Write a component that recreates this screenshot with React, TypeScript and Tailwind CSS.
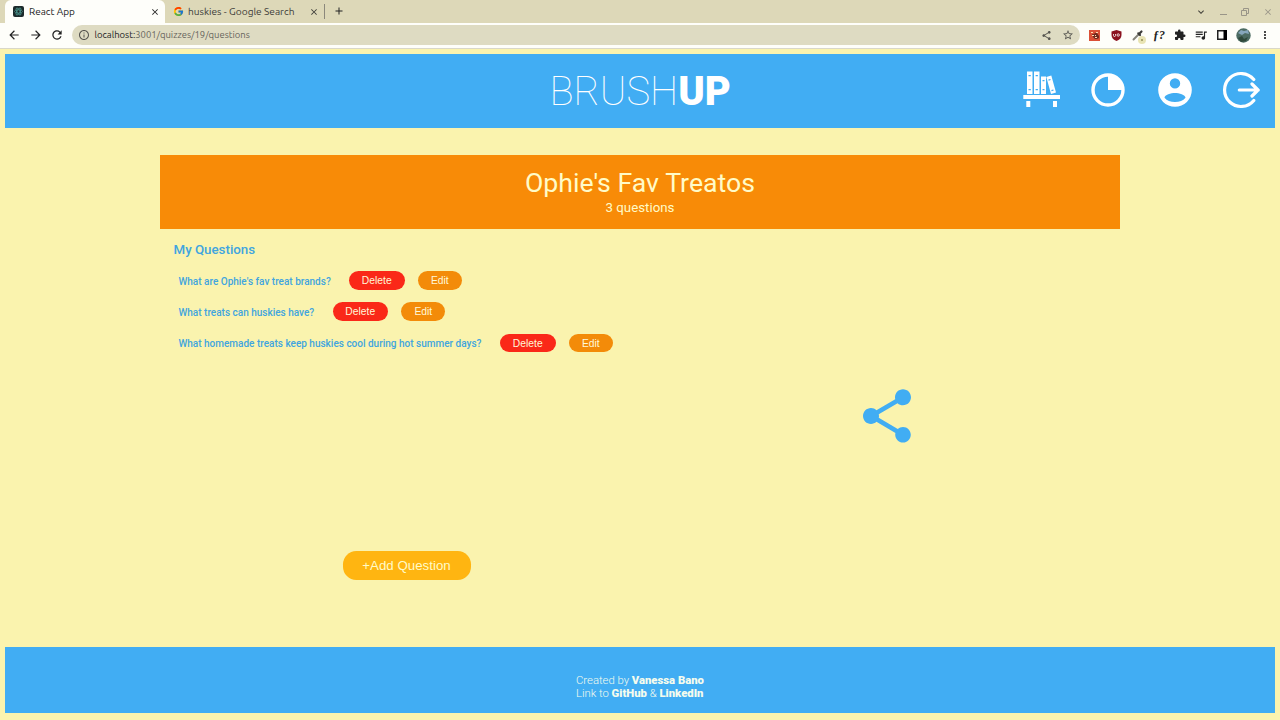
import type { ReactNode } from "react";
import {
  MdShare, MdStarBorder, MdExtension, MdQueueMusic, MdMoreVert, MdArrowBack, MdArrowForward,
  MdRefresh, MdInfoOutline, MdClose, MdAdd, MdExpandMore,
} from "react-icons/md";
import { FcGoogle } from "react-icons/fc";

function TabStrip() {
  return (
    <div className="flex h-[23px] bg-[#ddd8b8] font-[Ubuntu,'Open_Sans',sans-serif] text-[#3c3c38]">
      <div className="ml-[5px] flex w-[160px] items-center rounded-t-md bg-[#fefefa] pl-2 pr-[5px]">
        <svg className="h-[11px] w-[11px]" viewBox="0 0 11 11" fill="none" stroke="#4c9a91" strokeWidth=".7">
          <rect width="11" height="11" rx="2" fill="#1c2a2b" stroke="none" />
          <ellipse cx="5.5" cy="5.5" rx="4" ry="1.6" />
          <ellipse cx="5.5" cy="5.5" rx="4" ry="1.6" transform="rotate(60 5.5 5.5)" />
          <ellipse cx="5.5" cy="5.5" rx="4" ry="1.6" transform="rotate(120 5.5 5.5)" />
        </svg>
        <span className="ml-[5px] flex-1 whitespace-nowrap text-[10px] text-[#222]">React App</span>
        <MdClose className="h-[10px] w-[10px] text-[#222]" />
      </div>
      <div className="flex w-[160px] items-center border-r border-[#8b887c] [border-image:linear-gradient(transparent_5px,#8b887c_5px,#8b887c_18px,transparent_18px)_1] pl-2">
        <FcGoogle className="h-[11px] w-[11px]" />
        <span className="ml-[4px] w-[120px] whitespace-nowrap text-[10.15px]">huskies - Google Search</span>
        <MdClose className="ml-px h-[10px] w-[10px]" />
      </div>
      <MdAdd className="ml-2 mt-[5px] h-3 w-3 text-[#222]" />
      <div className="ml-auto flex items-center text-[#999588]">
        <MdExpandMore className="mr-[13px] h-3 w-3 text-[#44423b]" />
        <span className="mr-[14px] mt-[6px] h-px w-[7px] bg-[#999588]" />
        <svg className="mr-[14px] h-2 w-2" viewBox="0 0 8 8" fill="none" stroke="currentColor"><path d="M.5 2.5h5v5h-5zM2.500 2V.5h5v5H6" /></svg>
        <MdClose className="mr-[7px] h-[10px] w-[10px]" />
      </div>
    </div>
  );
}

function Toolbar() {
  return (
    <div className="flex h-[26px] items-center border-b border-[#d9d7c9] bg-[#fefefa] pb-px text-[#222]">
      <MdArrowBack className="ml-[7px] h-[14px] w-[14px]" />
      <MdArrowForward className="ml-2 h-[14px] w-[14px]" />
      <MdRefresh className="ml-[7px] h-[14px] w-[14px]" />
      <div className="ml-2 flex h-[20px] w-[1008px] items-center rounded-full bg-[#dedbc2] pl-[6px] pr-[6px]">
        <MdInfoOutline className="h-3 w-3 text-[#55544f]" />
        <span className="ml-[4.500px] flex-1 pt-px font-[Ubuntu,'Open_Sans',sans-serif] text-[9.450px] text-[#66645c]">
          <span className="text-[#222]">localhost:</span>3001/quizzes/19/questions
        </span>
        <MdShare className="mr-[10px] h-[11px] w-[11px] text-[#55544f]" />
        <MdStarBorder className="h-3 w-3 text-[#55544f]" />
      </div>
      <div className="ml-auto mr-[9px] flex items-center">
        <svg className="h-[11px] w-[11px]" viewBox="0 0 11 11">
          <rect width="11" height="11" fill="#db5037" />
          <path d="M3 4h2l1-1h2l2 3v2L8 9H6L4 7z" fill="#722a20" />
          <path d="M2 2h2v1H2zM7 2h2v1H7zM3 5h2v1H3zM6 5h1v1H6zM6 7h2v1H6z" fill="#ffd9b0" />
        </svg>
        <svg className="ml-[11px] h-[11px] w-[11px]" viewBox="0 0 11 11">
          <path d="M5.500 0l5 1.600V5c0 3-2 5-5 6-3-1-5-3-5-6V1.600z" fill="#8b1220" />
          <path d="M2.500 4v1.500a1 1 0 002 0V4M6 5a1.200 1.200 0 102.400 0A1.200 1.200 0 006 5" fill="none" stroke="#fff" strokeWidth=".8" />
        </svg>
        <div className="relative ml-[10px]">
          <svg className="h-3 w-3" viewBox="0 0 12 12" fill="none" strokeLinecap="round">
            <path d="M1.500 10.500L6.500 5.500" stroke="#85837a" strokeWidth="1.900" />
            <path d="M6.300 4.300L8 6M7.500 4.500L9.500 2.500" stroke="#3b3a37" strokeWidth="2.200" />
          </svg>
          <span className="absolute left-[6px] top-[7px] flex h-2 w-2 items-center justify-center rounded-full bg-[#e9e4b4]">
            <span className="h-0.5 w-0.5 bg-[#a9a570]" />
          </span>
        </div>
        <span className="ml-[9px] w-3 font-['Liberation_Serif',serif] text-[12px] font-bold italic leading-3">ƒ?</span>
        <MdExtension className="ml-[9px] h-3 w-3" />
        <MdQueueMusic className="ml-2 h-[14px] w-[14px]" />
        <svg className="ml-[9px] h-[10px] w-[10px]" viewBox="0 0 10 10"><path d="M.75.75h8.500v8.500H.75z" fill="none" stroke="currentColor" strokeWidth="1.500" /><path d="M6.500 0H10v10H6.500z" /></svg>
        <svg className="ml-[9px] h-[15px] w-[15px]" viewBox="0 0 15 15">
          <circle cx="7.500" cy="7.500" r="7.200" fill="#4c6b62" />
          <path d="M2 5l3-3 3 1 4-1 1 4-4-1-3 2z" fill="#86a6bc" />
          <path d="M2 10l4-2 2 3 4-2-2 4-5 1z" fill="#2f493b" />
        </svg>
        <MdMoreVert className="ml-2 h-3 w-3" />
      </div>
    </div>
  );
}

function BookshelfIcon() {
  return (
    <svg className="h-[38px] w-[38px]" viewBox="0 0 38 38" fill="currentColor">
      <path fillRule="evenodd" d="M4 .5h5.500v22.500H4zM5.500 4v1.200h2.300V4zM5.500 18v1.200h2.300V18zM11 .5h5.500v22.500H11zM12.600 4v1.200h2.300V4zM12.600 18v1.200h2.300V18zM18 5.500h5v17.500h-5zM19.500 9v1.200h2V9zM19.500 18v1.200h2V18z" />
      <path fillRule="evenodd" d="M23.300 6l5-1.500L33 21.500l-5 1.500zM25.300 8.500l.4 1.200 2-.6-.4-1.200zM28.300 19l.4 1.200 2-.6-.4-1.200z" />
      <path d="M.3 24H37v4H.3zM3.300 30h4v6h-4zM30 30h4v6h-4z" />
    </svg>
  );
}

function Header() {
  return (
    <header className="flex h-[74px] items-center bg-[#41adf3] text-white">
      <div className="flex-1" />
      <h1 className="w-[178px] whitespace-nowrap pt-[2px] font-[Roboto,sans-serif] text-[40px] font-thin leading-none">
        BRUSH<span className="font-black">UP</span>
      </h1>
      <nav className="flex w-[547.500px] items-center justify-end pb-[1.500px] pr-[15px]">
        <BookshelfIcon />
        <svg className="ml-[29px] h-[36px] w-[36px]" viewBox="0 0 36 36"><circle cx="18" cy="18" r="15" fill="none" stroke="currentColor" strokeWidth="3.400" /><path d="M18 2v16h16A16 16 0 0018 2z" fill="currentColor" /></svg>
        <svg className="ml-[31px] h-[36px] w-[36px]" viewBox="0 0 36 36"><path fill="currentColor" fillRule="evenodd" d="M18 1.200a16.800 16.800 0 100 33.600 16.800 16.800 0 000-33.600zM18 6.200a5.200 5.200 0 110 10.400 5.200 5.200 0 010-10.400zM18 21c4 0 10.500 1.800 10.500 4.800-2.400 3-6 4.200-10.500 4.200S9.900 28.800 7.500 25.800C7.500 22.800 14 21 18 21z" /></svg>
        <svg className="ml-[29px] h-[38px] w-[38px]" viewBox="0 0 38 38" fill="none" stroke="currentColor" strokeWidth="3.200" strokeLinecap="round" strokeLinejoin="round"><path d="M31.800 8.500a16.500 16.500 0 100 21M17.300 19H36.300M30 13l6 6-6 6" /></svg>
      </nav>
    </header>
  );
}

function PillButton({ children, className }: { children: ReactNode; className: string }) {
  return (
    <button className={`h-[18.500px] shrink-0 rounded-full pt-px font-['Liberation_Sans',sans-serif] text-[10.300px] leading-[17.500px] text-[#fff8d8] ${className}`}>
      {children}
    </button>
  );
}

const questions = [
  { text: "What are Ophie's fav treat brands?", width: "w-[170.500px]" },
  { text: "What treats can huskies have?", width: "w-[154px]" },
  { text: "What homemade treats keep huskies cool during hot summer days?", width: "w-[321.500px]" },
];

export default function App() {
  return (
    <div className="flex h-[720px] w-[1280px] flex-col overflow-hidden bg-[#faf3ae] font-[Roboto,sans-serif]">
      <TabStrip />
      <Toolbar />
      <div className="flex flex-1 flex-col px-[5px] pb-[7px] pt-[5px]">
        <Header />
        <main className="mx-auto mt-[26.600px] flex w-[960px] flex-1 flex-col">
          <div className="flex h-[74px] flex-col items-center bg-[#f88b07] pt-[13px] text-[#fffbc8]">
            <h2 className="text-[26.700px] leading-[31px]">Ophie's Fav Treatos</h2>
            <p className="mt-px text-[13.300px] leading-4">3 questions</p>
          </div>
          <div className="flex flex-1 text-[#41a5df]">
            <section className="w-[506px] pl-[13.500px] pt-[13px]">
              <h3 className="text-[13.300px] font-medium leading-4">My Questions</h3>
              <ul className="mt-[13.700px] flex flex-col gap-[13.300px] pl-[5px]">
                {questions.map((q) => (
                  <li key={q.text} className="flex h-[18px] items-center whitespace-nowrap text-[10px] font-medium">
                    <span className={`shrink-0 pt-[1.500px] ${q.width}`}>{q.text}</span>
                    <PillButton className="w-[55.500px] bg-[#fa2818]">Delete</PillButton>
                    <PillButton className="ml-[13.300px] w-[44px] bg-[#f38b09]">Edit</PillButton>
                  </li>
                ))}
              </ul>
              <button className="ml-[169px] mt-[199.100px] h-[29px] w-[128px] rounded-[13.300px] bg-[#ffb511] pt-px font-['Liberation_Sans',sans-serif] text-[13.300px] text-[#fffbc8]">
                +Add Question
              </button>
            </section>
            <aside className="flex flex-1 justify-center pr-3 pt-[155.400px]">
              <MdShare className="h-[64px] w-[64px] text-[#41adf3]" />
            </aside>
          </div>
        </main>
        <footer className="h-[66.400px] bg-[#41adf3] pl-[571px] pt-[27.400px] text-[11.300px] font-light leading-[13.300px] text-[#f4fcee]">
          <p>Created by <b className="font-black">Vanessa Bano</b></p>
          <p>Link to <b className="font-black">GitHub</b> &amp; <b className="font-black">LinkedIn</b></p>
        </footer>
      </div>
    </div>
  );
}
